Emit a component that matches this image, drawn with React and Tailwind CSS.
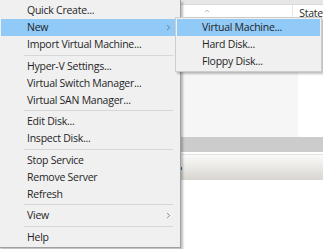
import { ChevronRight, ChevronUp } from 'lucide-react';

const mainItems = [
  { label: 'Quick Create...' },
  { label: 'New', sub: true, active: true },
  { label: 'Import Virtual Machine...' },
  { sep: true },
  { label: 'Hyper-V Settings...' },
  { label: 'Virtual Switch Manager...' },
  { label: 'Virtual SAN Manager...' },
  { sep: true },
  { label: 'Edit Disk...' },
  { label: 'Inspect Disk...' },
  { sep: true },
  { label: 'Stop Service' },
  { label: 'Remove Server' },
  { label: 'Refresh' },
  { sep: true },
  { label: 'View', sub: true },
  { sep: true },
  { label: 'Help' },
];

const newItems = [
  { label: 'Virtual Machine...', active: true },
  { label: 'Hard Disk...' },
  { label: 'Floppy Disk...' },
];

const MenuRow = ({ item }) => {
  if (item.sep) {
    return (
      <div className="h-[4.5px] flex items-center pl-[23px] pr-[4px]">
        <div className="h-px w-full bg-[#d7d7d7]"></div>
      </div>
    );
  }
  return (
    <div
      className={`h-[17px] flex items-center justify-between pl-[26px] pr-[4px] ${
        item.active ? 'bg-[#91c9f7]' : ''
      }`}
    >
      <span className="leading-none">{item.label}</span>
      {item.sub && <ChevronRight className="w-[9px] h-[9px] text-[#555]" strokeWidth={1.75} />}
    </div>
  );
};

export default function App() {
  return (
    <div
      className="relative w-[323px] h-[249px] overflow-hidden bg-white text-[10.5px] tracking-[-0.25px] text-[#1f1f1f]"
      style={{ fontFamily: '"Open Sans", "Noto Sans", sans-serif' }}
    >
      {/* Ventana de fondo */}
      <div className="flex flex-col h-full">
        <div className="h-[5px] bg-[#e6e6e6] border-b border-[#dadada]"></div>
        <div className="h-[18px] flex bg-white">
          <div className="w-[297px] border-r border-[#e5e5e5] relative">
            <ChevronUp className="absolute left-[203px] top-[2px] w-[8px] h-[8px] text-[#999]" strokeWidth={2} />
          </div>
          <div className="pl-[6px] leading-none pt-[3px]">State</div>
        </div>
        <div className="h-[114px] flex">
          <div className="w-[298px] bg-[#f6f6f6]"></div>
          <div className="flex-1 bg-white"></div>
        </div>
        <div className="h-[15px] bg-[#cccccc]"></div>
        <div className="h-[2px] bg-white"></div>
        <div className="h-px bg-[#e2e2e2]"></div>
        <div className="h-[25px] bg-gradient-to-b from-[#fafaf9] to-[#d9d6d0] relative">
          <div className="absolute left-[181px] top-[12px] w-px h-[3px] bg-[#2a6fc0]"></div>
        </div>
        <div className="flex-1 bg-white"></div>
      </div>

      {/* Menú contextual principal */}
      <div className="absolute left-[-2px] top-[0px] w-[183px] h-[248px] bg-[#f0f0f0] border-r border-b border-[#a0a0a0] shadow-[2px_2px_2px_rgba(0,0,0,0.25)] pt-[2px] pl-[3px] pr-[3px]">
        {mainItems.map((item, i) => (
          <MenuRow key={i} item={item} />
        ))}
      </div>

      {/* Submenú New */}
      <div className="absolute left-[175px] top-[17px] w-[147px] h-[55px] bg-[#f0f0f0] border border-[#cccccc] shadow-[2px_2px_2px_rgba(0,0,0,0.25)] pt-[1px] px-[1px]">
        {newItems.map((item, i) => (
          <div
            key={i}
            className={`h-[17px] flex items-center pl-[25px] ${item.active ? 'bg-[#91c9f7]' : ''}`}
          >
            <span className="leading-none">{item.label}</span>
          </div>
        ))}
      </div>
    </div>
  );
}
